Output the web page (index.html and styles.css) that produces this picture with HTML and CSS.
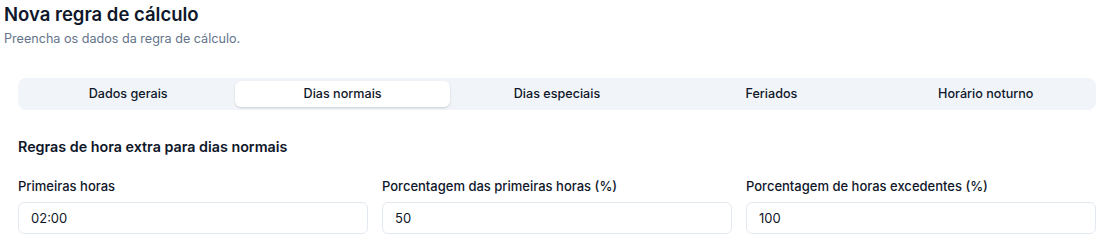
FILE: index.html
```html
<!DOCTYPE html>
<html lang="pt-BR">
<head>
  <meta charset="UTF-8" />
  <meta name="viewport" content="width=device-width, initial-scale=1.0"/>
  <title>Nova regra de cálculo</title>
  <link rel="stylesheet" href="styles.css">
</head>
<body>
  <div class="page-header">
    <h1 class="page-title">Nova regra de cálculo</h1>
    <p class="page-subtitle">Preencha os dados da regra de cálculo.</p>
  </div>

  <div class="content">
    <div class="tabs">
      <div class="tab">Dados gerais</div>
      <div class="tab active">Dias normais</div>
      <div class="tab">Dias especiais</div>
      <div class="tab">Feriados</div>
      <div class="tab">Horário noturno</div>
    </div>

    <h2 class="section-title">Regras de hora extra para dias normais</h2>

    <div class="form-grid">
      <div class="field">
        <label for="firstHours">Primeiras horas</label>
        <input type="text" id="firstHours" value="02:00">
      </div>
      <div class="field">
        <label for="firstPct">Porcentagem das primeiras horas (%)</label>
        <input type="text" id="firstPct" value="50">
      </div>
      <div class="field">
        <label for="extraPct">Porcentagem de horas excedentes (%)</label>
        <input type="text" id="extraPct" value="100">
      </div>
    </div>
  </div>
</body>
</html>
```

FILE: styles.css
```css
body {
  font-family: Inter, "Noto Sans", sans-serif;
  margin: 0;
  padding: 0;
  background-color: #ffffff;
  color: #0f172a;
}

.page-header {
  padding: 2px 4px 0;
}

.page-title {
  margin: 0;
  font-size: 18.5px;
  line-height: 24px;
  font-weight: 600;
  color: #0f172a;
}

.page-subtitle {
  margin: 3px 0 0;
  font-size: 12.6px;
  line-height: 20px;
  color: #64748b;
}

.content {
  padding: 0 16px 0 18px;
}

.tabs {
  margin-top: 29px;
  display: grid;
  grid-template-columns: repeat(5, 1fr);
  padding: 3px;
  background-color: #f1f5f9;
  border-radius: 8px;
}

.tab {
  height: 26px;
  line-height: 26px;
  text-align: center;
  font-size: 12.6px;
  font-weight: 500;
  color: #0f172a;
  border-radius: 6px;
}

.tab.active {
  background-color: #ffffff;
  box-shadow: 0 1px 3px rgba(0, 0, 0, 0.1), 0 1px 2px rgba(0, 0, 0, 0.06);
}

.section-title {
  margin: 27px 0 0;
  font-size: 14.3px;
  line-height: 20px;
  font-weight: 600;
  color: #0f172a;
}

.form-grid {
  margin-top: 20px;
  display: grid;
  grid-template-columns: repeat(3, 1fr);
  gap: 14px;
}

.field {
  display: flex;
  flex-direction: column;
  gap: 7px;
}

.field label {
  font-size: 13px;
  line-height: 18px;
  font-weight: 500;
  color: #0f172a;
}

.field input {
  height: 32px;
  box-sizing: border-box;
  padding: 0 12px;
  border: 1px solid #e2e8f0;
  border-radius: 6px;
  font-family: inherit;
  font-size: 13px;
  color: #0f172a;
  background: #ffffff;
}
```
